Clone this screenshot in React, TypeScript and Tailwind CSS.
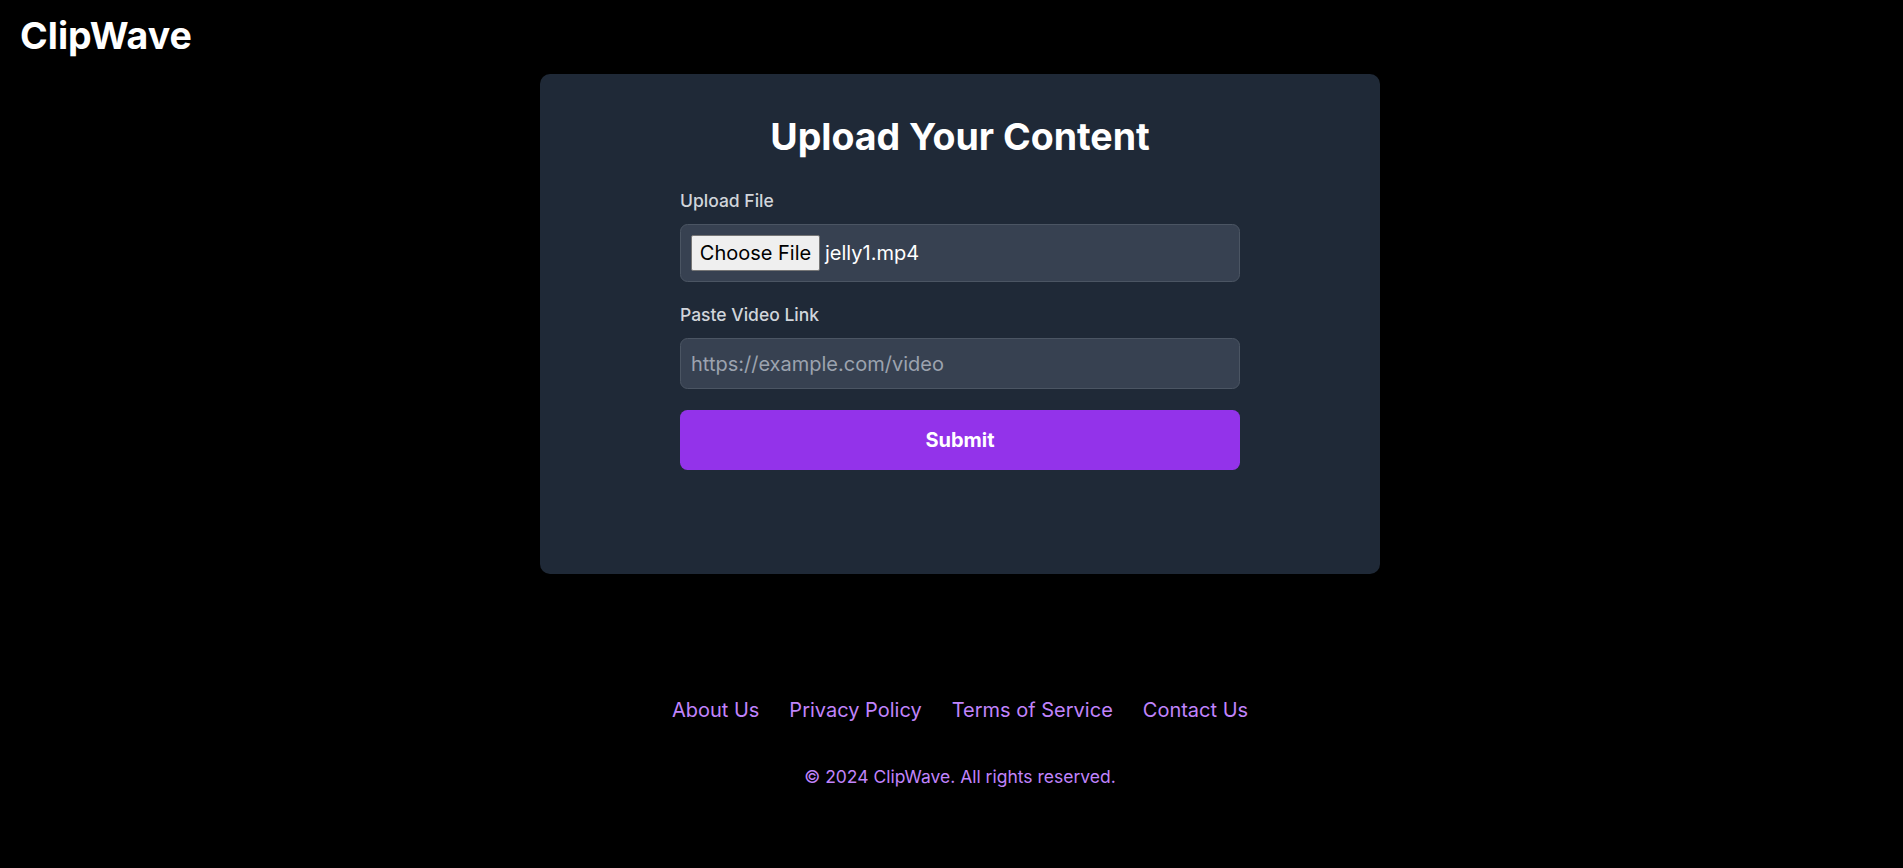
export default function App() {
  return (
    <div className="min-h-screen bg-black text-white font-['Inter',sans-serif]">
      <header className="px-5 pt-[13px]">
        <h1 className="text-[37.5px] font-bold leading-[45px]">ClipWave</h1>
      </header>

      <main className="mt-[16px] flex justify-center pl-[17px]">
        <div className="w-[840px] rounded-[10px] bg-[#1f2937] px-[140px] pt-10 pb-[104px]">
          <h2 className="mb-[29px] text-center text-[37.5px] font-bold leading-[45px]">Upload Your Content</h2>

          <label className="mb-[11px] block text-[17.5px] leading-[25px] font-medium text-[#d1d5db]">Upload File</label>
          <div className="flex h-[58px] items-center rounded-[7.5px] border border-[#4b5563] bg-[#374151] px-[10px] text-[20px] leading-[30px]">
            <span className="flex h-9 w-[129px] items-center justify-center rounded-[2px] border border-[#767676] bg-[#efefef] text-black">
              Choose File
            </span>
            <span className="ml-[5px]">jelly1.mp4</span>
          </div>

          <label className="mt-[20px] mb-[11px] block text-[17.5px] leading-[25px] font-medium text-[#d1d5db]">
            Paste Video Link
          </label>
          <input
            type="text"
            placeholder="https://example.com/video"
            className="block h-[51px] w-full rounded-[7.5px] border border-[#4b5563] bg-[#374151] px-[10px] text-[20px] text-white outline-none placeholder:text-[#9ca3af]"
          />

          <button className="mt-[21px] block h-[60px] w-full rounded-[7.5px] bg-[#9333ea] text-[20px] font-bold text-white">
            Submit
          </button>
        </div>
      </main>

      <footer className="mt-[121px] pl-[17px] text-center text-[#c084fc]">
        <nav className="flex justify-center gap-[30px] text-[20px] leading-[30px]">
          <a href="#">About Us</a>
          <a href="#">Privacy Policy</a>
          <a href="#">Terms of Service</a>
          <a href="#">Contact Us</a>
        </nav>
        <p className="mt-[39px] text-[17.5px] leading-[25px]">© 2024 ClipWave. All rights reserved.</p>
      </footer>
    </div>
  );
}
